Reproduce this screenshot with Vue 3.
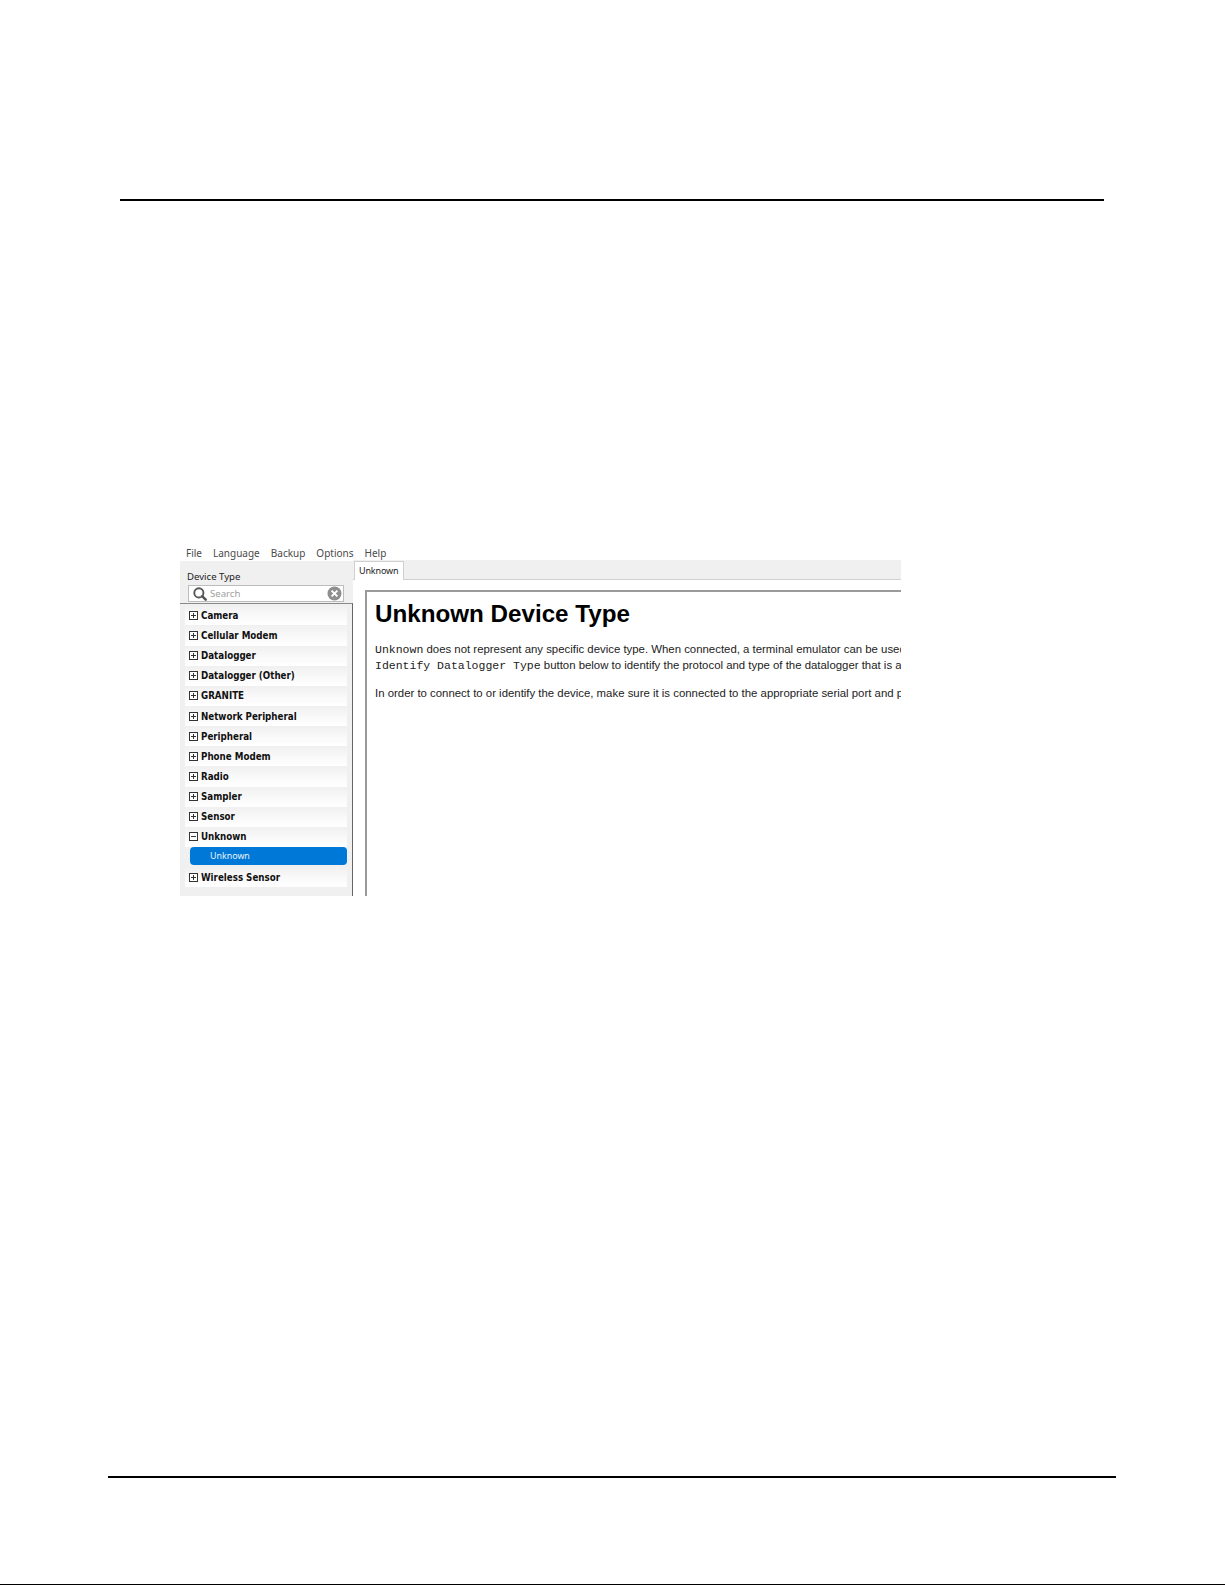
<script setup>
const groups = ['Camera','Cellular Modem','Datalogger','Datalogger (Other)','GRANITE','Network Peripheral','Peripheral','Phone Modem','Radio','Sampler','Sensor']
const menus = ['File','Language','Backup','Options','Help']
</script>

<template>
  <div class="page">
    <div class="rule top"></div>
    <div class="shot">
      <div class="menubar">
        <span v-for="m in menus" :key="m">{{ m }}</span>
      </div>
      <div class="body">
        <aside class="side">
          <div class="dt">Device Type</div>
          <div class="search">
            <svg class="mag" width="15" height="15" viewBox="0 0 15 15"><circle cx="6.3" cy="6.3" r="4.9" fill="none" stroke="#555" stroke-width="2"/><path d="M9.8 9.8 13.6 13.6" stroke="#555" stroke-width="2.6" stroke-linecap="round"/></svg>
            <span class="ph">Search</span>
            <svg class="clr" width="15" height="15" viewBox="0 0 15 15"><circle cx="7.5" cy="7.5" r="7" fill="#8f8f8f"/><path d="M4.6 4.6 10.4 10.4M10.4 4.6 4.6 10.4" stroke="#fff" stroke-width="1.9"/></svg>
          </div>
          <div class="tree">
            <div v-for="g in groups" :key="g" class="row">
              <svg class="box" width="9" height="9" viewBox="0 0 9 9"><rect x=".5" y=".5" width="8" height="8" fill="#fff" stroke="#333"/><path d="M2 4.5H7M4.5 2V7" stroke="#333"/></svg>
              <span>{{ g }}</span>
            </div>
            <div class="row">
              <svg class="box" width="9" height="9" viewBox="0 0 9 9"><rect x=".5" y=".5" width="8" height="8" fill="#fff" stroke="#333"/><path d="M2 4.5H7" stroke="#333"/></svg>
              <span>Unknown</span>
            </div>
            <div class="sel">Unknown</div>
            <div class="row">
              <svg class="box" width="9" height="9" viewBox="0 0 9 9"><rect x=".5" y=".5" width="8" height="8" fill="#fff" stroke="#333"/><path d="M2 4.5H7M4.5 2V7" stroke="#333"/></svg>
              <span>Wireless Sensor</span>
            </div>
          </div>
        </aside>
        <main class="main">
          <div class="tabs"><div class="tab">Unknown</div></div>
          <div class="doc">
            <h1>Unknown Device Type</h1>
            <p class="l1"><code>Unknown</code> does not represent any specific device type. When connected, a terminal emulator can be used to communicate with it. Use the</p>
            <p class="l2"><code>Identify Datalogger Type</code> button below to identify the protocol and type of the datalogger that is attached to the serial port.</p>
            <p class="l3">In order to connect to or identify the device, make sure it is connected to the appropriate serial port and press the button.</p>
          </div>
        </main>
      </div>
    </div>
    <div class="rule bottom"></div>
    <div class="edge"></div>
  </div>
</template>

<style scoped>
.page { width: 1225px; height: 1585px; background: #fff; overflow: hidden; padding-top: 199px; box-sizing: border-box; }
.rule { height: 2px; background: #000; }
.top { margin: 0 121px 0 120px; }
.bottom { margin: 0 109px 0 108px; }
.edge { height: 1px; background: #000; margin-top: 106px; }
.shot { width: 721px; height: 351px; margin: 344px 0 580px 180px; display: flex; flex-direction: column; overflow: hidden; }
.menubar { height: 16px; display: flex; font: 10px/16px "Noto Sans", sans-serif; color: #4a4a4a; padding-left: 6px; gap: 11px; flex: none; }
.body { flex: 1; display: flex; min-height: 0; }
.side { width: 173px; flex: none; background: #f0f0f0; position: relative; }
.dt { font: 9.6px/14px "Noto Sans", sans-serif; color: #222; padding: 9px 0 0 7px; }
.search { margin: 1px 0 0 8px; width: 156px; height: 17px; box-sizing: border-box; border: 1px solid #bdbdbd; background: #fff; display: flex; align-items: center; padding: 0 1px 0 4px; }
.mag { flex: none; width: 14px; height: 14px; }
.ph { font: 9.6px "Noto Sans", sans-serif; color: #a0a0a0; margin-left: 3px; flex: 1; }
.clr { flex: none; width: 15px; height: 15px; }
.tree { margin-top: 1px; height: 300px; border-top: 1px solid #8a8a8a; border-right: 1px solid #666; box-sizing: border-box; padding: 1.3px 0 0 5px; width: 173px; }
.row { height: 20.15px; width: 162px; display: flex; align-items: center; gap: 3px; background: linear-gradient(#f0f0f0, #fafafa 60%, #fff); font: bold 9.7px "DejaVu Sans", sans-serif; font-stretch: condensed; color: #111; padding-left: 4px; box-sizing: border-box; }
.box { flex: none; }
.sel { height: 18px; width: 157px; margin: 0 0 2.15px 5px; border-radius: 4px; background: #0078d7; color: #e8f2fb; font: 8.9px/18px "Noto Sans", sans-serif; padding-left: 20px; box-sizing: border-box; }
.main { flex: 1; min-width: 0; }
.tabs { height: 20px; margin-top: -1px; background: #f0f0f0; border-bottom: 1px solid #d0d0d0; padding: 1px 0 0 1px; box-sizing: border-box; }
.tab { width: 50px; height: 19px; box-sizing: border-box; background: #fff; border: 1px solid #d0d0d0; border-bottom: 0; font: 9px/17px "Noto Sans", sans-serif; letter-spacing: -.15px; color: #222; padding-left: 4px; }
.doc { margin: 10px 0 0 12px; border: 2px solid #9a9a9a; border-right: 0; border-bottom: 0; height: 320px; padding: 8px 0 0 8px; overflow: hidden; white-space: nowrap; background: #fff; }
h1 { margin: 0; font: bold 24.2px/28px "Liberation Sans", sans-serif; color: #000; }
p { margin: 0; font: 11.4px/16px "Liberation Sans", sans-serif; color: #222; }
code { font: 11.5px "Liberation Mono", monospace; }
.l1 { margin-top: 13px; }
.l3 { margin-top: 12px; }
</style>

<style>
html, body { margin: 0; background: #fff; }
</style>
